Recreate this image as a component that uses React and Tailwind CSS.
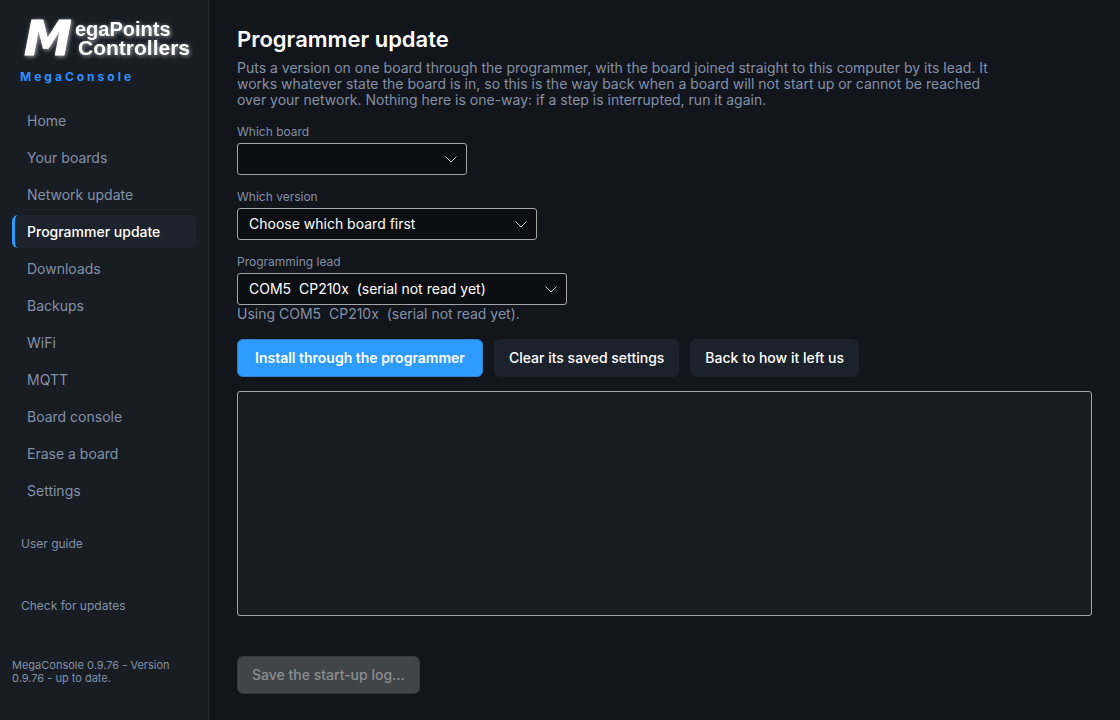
import React, { useState } from 'react';
import clsx from 'clsx';

const NAV_ITEMS = [
  'Home',
  'Your boards',
  'Network update',
  'Programmer update',
  'Downloads',
  'Backups',
  'WiFi',
  'MQTT',
  'Board console',
  'Erase a board',
  'Settings'
];

const LEAD = 'COM5\u00a0 CP210x\u00a0 (serial not read yet)';

const Logo = () => (
  <svg
    viewBox="0 0 176 48"
    role="img"
    aria-label="MegaPoints Controllers"
    className="block w-[176px] h-12 overflow-visible [filter:drop-shadow(1px_1px_2px_#ffffffa0)]"
  >
    <g fill="#fff" fontFamily="'Liberation Sans', Arial, sans-serif" fontWeight="700">
      <text
        x="4"
        y="39"
        fontFamily="'DejaVu Sans', sans-serif"
        fontStyle="italic"
        fontSize="48"
        stroke="#fff"
        strokeWidth="1"
        strokeLinejoin="round"
      >
        M
      </text>
      <text x="55" y="20" fontSize="20">egaPoints</text>
      <text x="58" y="39" fontSize="21">Controllers</text>
    </g>
  </svg>
);

const NavItem = ({ label, active, onSelect }) => (
  <a
    href="#"
    aria-current={active ? 'page' : undefined}
    onClick={(e) => {
      e.preventDefault();
      onSelect(label);
    }}
    className={clsx(
      'flex items-center h-[33px] pl-3 rounded-md border-l-[3px] text-sm',
      active ? 'bg-[#1d232c] border-[#2e9bff] text-white font-medium' : 'border-transparent'
    )}
  >
    {label}
  </a>
);

const SelectField = ({ id, label, width, children }) => (
  <div>
    <label htmlFor={id} className="block text-xs leading-[15px] mb-1">{label}</label>
    <div className={clsx('relative', width)}>
      <select
        id={id}
        className="block w-full h-8 pl-[11px] pr-8 appearance-none rounded-[3px] border border-[#a3a5a7] bg-[#0c0e12] text-sm text-white"
      >
        {children}
      </select>
      <svg
        viewBox="0 0 12 7"
        className="absolute right-[10px] top-[13px] w-3 h-[7px] pointer-events-none"
        fill="none"
        stroke="#c9cacc"
      >
        <path d="M0.5 0.5 L6 6 L11.5 0.5" />
      </svg>
    </div>
  </div>
);

const Button = ({ className, ...props }) => (
  <button
    type="button"
    className={clsx('h-[38px] rounded-md border text-sm', className)}
    {...props}
  />
);

export default function App() {
  const [page, setPage] = useState('Programmer update');

  return (
    <div className="flex min-h-screen bg-[#12151c] text-[#8391a7] font-['Inter',sans-serif]">
      {/* Sidebar */}
      <aside className="w-[209px] shrink-0 px-3 pt-4 bg-[#181c23] border-r border-[#262c36]">
        <div className="pl-2">
          <Logo />
          <p className="mt-1 text-xs leading-[18px] font-bold tracking-[3px] text-[#2e90ff]">MegaConsole</p>
        </div>
        <nav className="mt-[18px] flex flex-col gap-1">
          {NAV_ITEMS.map((label) => (
            <NavItem key={label} label={label} active={label === page} onSelect={setPage} />
          ))}
        </nav>
        <div className="mt-7 pl-[9px] flex flex-col items-start gap-11 text-xs leading-[18px]">
          <a href="#guide">User guide</a>
          <a href="#updates">Check for updates</a>
        </div>
        <p className="mt-11 text-[11px] leading-[13px]">MegaConsole 0.9.76 - Version 0.9.76 - up to date.</p>
      </aside>

      {/* Programmer page */}
      <main className="flex-1 min-w-0 flex flex-col px-7 pt-6 pb-[26px]">
        <h1 className="text-[22px] leading-[30px] font-semibold text-white">Programmer update</h1>
        <p className="mt-[6px] max-w-[760px] text-sm leading-4">
          Puts a version on one board through the programmer, with the board joined straight to this computer by its
          lead. It works whatever state the board is in, so this is the way back when a board will not start up or
          cannot be reached over your network. Nothing here is one-way: if a step is interrupted, run it again.
        </p>

        <div className="mt-4 flex flex-col gap-[14px]">
          <SelectField id="board" label="Which board" width="w-[230px]">
            <option value="" aria-label="No board chosen" />
          </SelectField>
          <SelectField id="version" label="Which version" width="w-[300px]">
            <option>Choose which board first</option>
          </SelectField>
          <SelectField id="lead" label="Programming lead" width="w-[330px]">
            <option>{LEAD}</option>
          </SelectField>
        </div>
        <p className="text-sm leading-[18px]">Using {LEAD}.</p>

        <div className="mt-4 flex flex-wrap gap-[11px]">
          <Button className="px-[17px] bg-[#2e9bff] border-[#2e7fcc] text-white font-semibold">
            Install through the programmer
          </Button>
          <Button className="px-[14px] bg-[#1c222b] border-[#1c222b] text-white font-medium">
            Clear its saved settings
          </Button>
          <Button className="px-[14px] bg-[#1c222b] border-[#1c222b] text-white font-medium">
            Back to how it left us
          </Button>
        </div>

        <textarea
          readOnly
          aria-label="Programmer output"
          className="mt-[14px] flex-1 min-h-24 w-full resize-none rounded-[3px] border border-[#a3a5a7] bg-[#181c23] p-2 text-sm"
        />

        <Button disabled className="mt-10 self-start px-[14px] bg-[#414449] border-[#35383d] text-[#8b8d90] font-medium">
          Save the start-up log...
        </Button>
      </main>
    </div>
  );
}
